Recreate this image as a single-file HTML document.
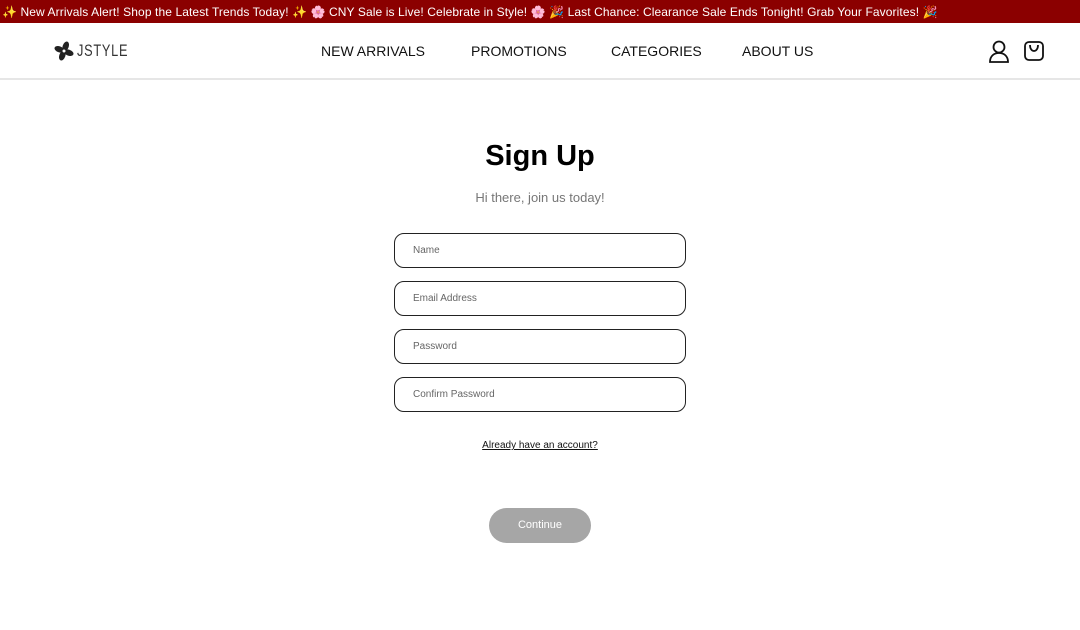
<!DOCTYPE html>
<html><head><meta charset="utf-8"><style>
*{margin:0;padding:0;box-sizing:border-box}
body{width:1080px;height:630px;background:#fff;font-family:"Liberation Sans","Noto Sans CJK SC",sans-serif;position:relative;overflow:hidden}
.bar{height:23px;background:#8b0000;color:#fff;font-size:12px;line-height:24px;white-space:nowrap;padding-left:2px;letter-spacing:.1px}
.hdr{height:57px;border-bottom:2px solid #e6e6e6;position:relative}
.logo{position:absolute;left:54px;top:18px;display:flex;align-items:center;gap:3px;color:#333}
.logo span{font-size:17px;font-weight:300;display:inline-block;transform:scaleX(.75);transform-origin:left;letter-spacing:1px}
.nav{position:absolute;top:20px;font-size:14px;color:#111;letter-spacing:0}
h1{position:absolute;top:140px;width:100%;text-align:center;font-size:29px;font-weight:bold;color:#000}
.sub{position:absolute;top:190px;width:100%;text-align:center;font-size:13px;color:#777}
.in{position:absolute;left:394px;width:292px;height:35px;border:1px solid #222;border-radius:10px;font-size:10px;color:#666;padding-left:18px;line-height:34px}
.al{position:absolute;top:440px;width:100%;text-align:center;font-size:10px;text-decoration:underline;color:#111}
.btn{position:absolute;left:489px;top:508px;width:102px;height:35px;border-radius:18px;background:#a6a6a6;color:#fff;font-size:11px;text-align:center;line-height:35px}
</style></head><body>
<div class="bar">✨ New Arrivals Alert! Shop the Latest Trends Today! ✨ 🌸 CNY Sale is Live! Celebrate in Style! 🌸 🎉 Last Chance: Clearance Sale Ends Tonight! Grab Your Favorites! 🎉</div>
<div class="hdr">
<div class="logo"><svg width="20" height="20" viewBox="0 0 20 20"><g fill="#222"><ellipse cx="10" cy="5" rx="3" ry="5" transform="rotate(20 10 10)"/><ellipse cx="10" cy="5" rx="3" ry="5" transform="rotate(110 10 10)"/><ellipse cx="10" cy="5" rx="3" ry="5" transform="rotate(200 10 10)"/><ellipse cx="10" cy="5" rx="3" ry="5" transform="rotate(290 10 10)"/></g><circle cx="10" cy="10" r="1.5" fill="#fff"/></svg><span>JSTYLE</span></div>
<div class="nav" style="left:321px">NEW ARRIVALS</div>
<div class="nav" style="left:471px">PROMOTIONS</div>
<div class="nav" style="left:611px">CATEGORIES</div>
<div class="nav" style="left:742px">ABOUT US</div>
<svg style="position:absolute;left:988px;top:17px" width="22" height="24" viewBox="0 0 22 24" fill="none" stroke="#111" stroke-width="1.8"><circle cx="11" cy="7" r="5.5"/><path d="M2 22c0-6 4-9 9-9s9 3 9 9z"/></svg>
<svg style="position:absolute;left:1023px;top:17px" width="22" height="22" viewBox="0 0 22 22" fill="none" stroke="#111" stroke-width="1.8"><rect x="2" y="2" width="18" height="18" rx="4"/><path d="M7 5c0 4 2 6 4 6s4-2 4-6"/></svg>
</div>
<h1>Sign Up</h1>
<div class="sub">Hi there, join us today!</div>
<div class="in" style="top:233px">Name</div>
<div class="in" style="top:281px">Email Address</div>
<div class="in" style="top:329px">Password</div>
<div class="in" style="top:377px">Confirm Password</div>
<div class="al">Already have an account?</div>
<div class="btn">Continue</div>
</body></html>
